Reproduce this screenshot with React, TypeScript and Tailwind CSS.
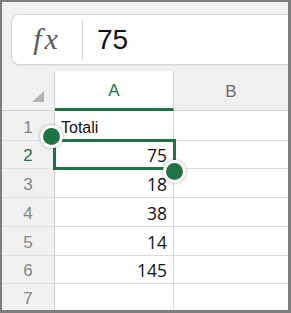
import React from "react";

const GREEN = "#217346";

const rows: { n: number; h: number; v: string }[] = [
  { n: 1, h: 30, v: "" },
  { n: 2, h: 28, v: "75" },
  { n: 3, h: 29, v: "18" },
  { n: 4, h: 29, v: "38" },
  { n: 5, h: 29, v: "14" },
  { n: 6, h: 28, v: "145" },
  { n: 7, h: 28, v: "" },
];

function Handle({ className }: { className: string }) {
  return (
    <div
      className={`absolute w-[23px] h-[23px] rounded-full bg-white flex items-center justify-center shadow-[0_0_3px_rgba(0,0,0,0.35)] ${className}`}
    >
      <div className="w-[17px] h-[17px] rounded-full bg-[#217346]" />
    </div>
  );
}

export default function App() {
  return (
    <div className="w-[291px] h-[313px] bg-[#7d7d7d] pl-[2px] pt-[2px] pr-[3px] pb-[3px]">
      <div className="w-full h-full bg-[#f1f1f1] flex flex-col overflow-hidden">
        {/* formula bar */}
        <div className="pt-[12px] pl-[9px] h-[63px] shrink-0">
          <div className="h-[51px] bg-white border border-r-0 border-[#d8d8d8] rounded-l-[8px] flex items-center shadow-[0_1px_1px_rgba(0,0,0,0.06)]">
            <div className="w-[70px] h-full flex items-center justify-center">
              <span
                className="italic text-[30px] text-[#5a5a5a] tracking-[3px] leading-none pb-[2px]"
                style={{ fontFamily: '"Liberation Serif", serif' }}
              >
                fx
              </span>
            </div>
            <div className="w-px h-[40px] bg-[#d4d4d4]" />
            <div
              className="pl-[14px] text-[28px] leading-none text-[#111]"
              style={{ fontFamily: '"Liberation Sans", Arial, sans-serif' }}
            >
              75
            </div>
          </div>
        </div>
        <div className="h-[6px] shrink-0" />
        {/* grid */}
        <div className="relative flex-1 flex flex-col" style={{ fontFamily: '"Liberation Sans", Arial, sans-serif' }}>
          {/* header row */}
          <div className="flex h-[40px] shrink-0">
            <div className="w-[53px] h-full border-r border-b border-[#d2d2d2] relative">
              <svg className="absolute left-0 top-0" width="53" height="40">
                <polygon points="42,20 42,31 30,31" fill="#b4b4b4" />
              </svg>
            </div>
            <div className="w-[119px] h-full bg-white border-r border-r-[#d6d6d6] border-b-[3px] border-b-[#217346] flex items-center justify-center pt-[1px]">
              <span className="text-[17px] leading-none" style={{ color: GREEN }}>A</span>
            </div>
            <div className="flex-1 h-full border-b border-[#d2d2d2] flex items-center justify-center pt-[2px]">
              <span className="text-[17px] leading-none text-[#6a6a6a]">B</span>
            </div>
          </div>
          {rows.map((r) => (
            <div key={r.n} className="flex shrink-0" style={{ height: r.h }}>
              <div className="w-[53px] h-full border-r border-r-[#d0d0d0] border-b border-b-[#e2e2e2] flex items-end justify-center pb-[4px]">
                <span
                  className="text-[17px] leading-none"
                  style={{ color: r.n === 2 ? GREEN : "#858585" }}
                >
                  {r.n}
                </span>
              </div>
              <div className="w-[119px] h-full bg-white border-r border-b border-[#dadada] flex items-end justify-end pr-[6px] pb-[4px]">
                {r.n === 1 ? (
                  <span className="text-[16px] leading-none text-[#111] mr-auto pl-[6px]">Totali</span>
                ) : (
                  <span
                    className="text-[17.5px] leading-none text-[#111]"
                    style={{ fontFamily: '"Open Sans", sans-serif' }}
                  >
                    {r.v}
                  </span>
                )}
              </div>
              <div className="flex-1 h-full bg-white border-b border-[#dadada]" />
            </div>
          ))}
          {/* selection */}
          <div className="absolute left-[51px] top-[68px] w-[123px] h-[31px] border-[3px] border-[#217346]" />
          <Handle className="left-[38px] top-[54px]" />
          <Handle className="left-[161px] top-[89px]" />
        </div>
      </div>
    </div>
  );
}
